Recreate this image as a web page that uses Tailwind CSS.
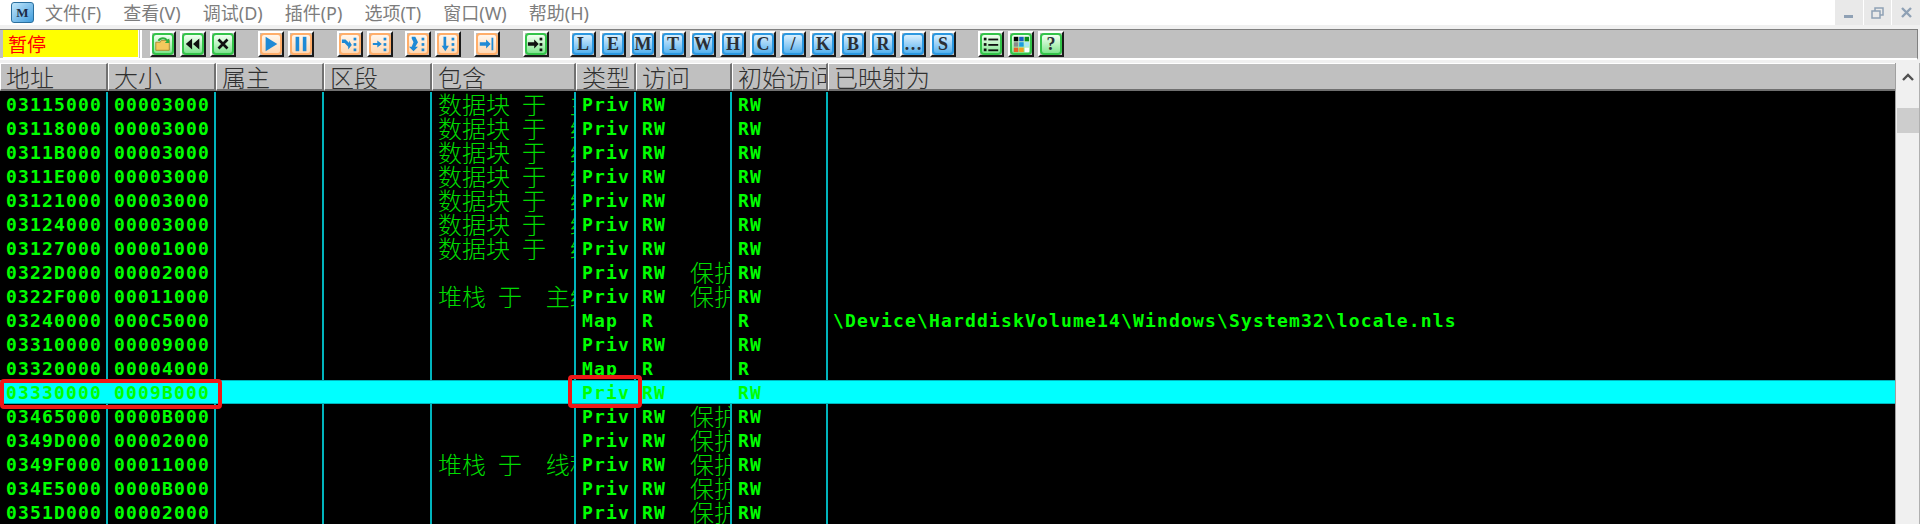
<!DOCTYPE html>
<html lang="zh">
<head>
    <meta charset="UTF-8">
    <title>OllyDbg</title>
    <script src="https://cdn.jsdelivr.net/npm/@tailwindcss/browser@4"></script>
</head>
<body class="bg-[#f0f0f0] overflow-hidden">
    <div class="relative w-[1920px] h-[524px] flex flex-col overflow-hidden font-['Noto_Sans','Noto_Sans_CJK_SC',sans-serif]">
        <!-- Menu bar -->
        <div class="h-[25px] bg-white flex items-center">
            <div class="ml-[11px] w-[23px] h-[21px] rounded-[3px] border border-[#2a6f9e] bg-linear-to-br from-[#bfe6fa] to-[#3d9ddc] flex items-center justify-center text-[13px] font-bold text-[#1c2a44] font-['Liberation_Serif',serif]">M</div>
            <div class="ml-[11px] flex gap-[22px] text-[18px] text-[#7d7d7d] leading-none">
                <span>文件(F)</span>
                <span>查看(V)</span>
                <span>调试(D)</span>
                <span>插件(P)</span>
                <span>选项(T)</span>
                <span>窗口(W)</span>
                <span>帮助(H)</span>
            </div>
            <div class="ml-auto w-[85px] h-full bg-[#e9e9e9] flex">
                <div class="flex-1 flex items-center justify-center border-r border-white">
                    <svg width="12" height="12" viewBox="0 0 12 12"><rect x="1" y="8" width="9" height="3" fill="#8fa1b5"/></svg>
                </div>
                <div class="flex-1 flex items-center justify-center border-r border-white">
                    <svg width="14" height="14" viewBox="0 0 14 14" fill="none" stroke="#8fa1b5" stroke-width="1.5"><rect x="1" y="5" width="8" height="7"/><path d="M4 5V2h8v7H9"/></svg>
                </div>
                <div class="flex-1 flex items-center justify-center">
                    <svg width="13" height="13" viewBox="0 0 13 13" fill="none" stroke="#8fa1b5" stroke-width="2.4"><path d="M2 2l9 9M11 2l-9 9"/></svg>
                </div>
            </div>
        </div>
        <div class="h-[4px] bg-[#f0f0f0]"></div>

        <!-- Toolbar -->
        <div class="h-[31px] mr-[2px] bg-[#c0c0c0] border-t border-t-[#808080] border-b-2 border-b-white border-r border-r-[#808080] flex items-center">
            <div class="ml-[3px] w-[136px] h-[28px] bg-[#ffff00] text-[#ff0000] text-[19px] leading-none flex items-center pl-[5px] border-r border-b border-white font-['Noto_Sans_CJK_SC',sans-serif]">暂停</div>
            <div class="w-[2px] h-full ml-[1px] bg-white"></div>
            <div id="toolbar" class="ml-[8px] flex"></div>
        </div>
        <div class="h-[3px] bg-[#f0f0f0]"></div>

        <!-- Memory map -->
        <div class="flex-1 flex min-h-0">
            <div class="flex-1 flex flex-col min-w-0 bg-black">
                <div class="h-[28px] grid grid-cols-[108px_108px_108px_108px_144px_60px_96px_96px_1fr] bg-[#c0c0c0] text-[24px] leading-[26px] text-[#303030] font-light font-['Noto_Sans_CJK_SC',sans-serif]">
                    <div class="border-t border-l border-white border-r-2 border-r-[#707070] border-b-2 border-b-[#707070] pl-[5px] overflow-hidden whitespace-nowrap">地址</div>
                    <div class="border-t border-l border-white border-r-2 border-r-[#707070] border-b-2 border-b-[#707070] pl-[5px] overflow-hidden whitespace-nowrap">大小</div>
                    <div class="border-t border-l border-white border-r-2 border-r-[#707070] border-b-2 border-b-[#707070] pl-[5px] overflow-hidden whitespace-nowrap">属主</div>
                    <div class="border-t border-l border-white border-r-2 border-r-[#707070] border-b-2 border-b-[#707070] pl-[5px] overflow-hidden whitespace-nowrap">区段</div>
                    <div class="border-t border-l border-white border-r-2 border-r-[#707070] border-b-2 border-b-[#707070] pl-[5px] overflow-hidden whitespace-nowrap">包含</div>
                    <div class="border-t border-l border-white border-r-2 border-r-[#707070] border-b-2 border-b-[#707070] pl-[5px] overflow-hidden whitespace-nowrap">类型</div>
                    <div class="border-t border-l border-white border-r-2 border-r-[#707070] border-b-2 border-b-[#707070] pl-[5px] overflow-hidden whitespace-nowrap">访问</div>
                    <div class="border-t border-l border-white border-r-2 border-r-[#707070] border-b-2 border-b-[#707070] pl-[5px] overflow-hidden whitespace-nowrap">初始访问</div>
                    <div class="border-t border-l border-white border-b-2 border-b-[#707070] pl-[5px] overflow-hidden whitespace-nowrap">已映射为</div>
                </div>
                <div id="rows" class="pt-px"></div>
            </div>
            <!-- Scrollbar -->
            <div class="w-[25px] bg-[#f0f0f0] border-l border-l-[#a0a0a0] border-r border-r-[#b0b0b0] flex flex-col items-center">
                <svg class="mt-[9px]" width="12" height="10" viewBox="0 0 12 10" fill="none" stroke="#505050" stroke-width="2.4"><path d="M1 8l5-5 5 5"/></svg>
                <div class="mt-[26px] w-[22px] h-[25px] bg-[#cdcdcd]"></div>
            </div>
        </div>

        <!-- Red annotation boxes -->
        <div class="absolute left-0 top-[379px] w-[222px] h-[30px] border-4 border-[#f01818] rounded-[4px]"></div>
        <div class="absolute left-[568px] top-[375px] w-[74px] h-[33px] border-4 border-[#f01818] rounded-[4px]"></div>
    </div>

    <script>
        const tones = {
            green: 'border-[#34c44a] from-[#f2fff2] to-[#7fe58f]',
            orange: 'border-[#ffae6a] from-[#fff6ec] to-[#ffd9b5]',
            blue: 'border-[#2c98e0] from-[#d8effd] to-[#55b2ee]'
        };
        const blue = '#1f8ad6';
        const dots = (c) => `<rect x="14" y="3" width="3" height="3" fill="${c}"/><rect x="14" y="9" width="3" height="3" fill="${c}"/><rect x="14" y="15" width="3" height="3" fill="${c}"/>`;
        const svg = (body) => `<svg width="20" height="20" viewBox="0 0 20 20">${body}</svg>`;
        const letter = (t) => `<span class="text-[18px] font-bold leading-none text-[#2b2f36] font-['Liberation_Serif',serif]">${t}</span>`;
        const icons = {
            open: svg('<path d="M2 8h5l1-2h9v11H2z" fill="#f4c95d" stroke="#a8842c"/><path d="M4 6C6 2 12 1 15 5l2-1v5h-5l2-2C12 4 8 4 6 7z" fill="#2fae3e"/>'),
            rewind: svg('<path d="M9 4v12L2 10zM17 4v12l-7-6z" fill="#101010"/>'),
            close: svg('<path d="M5 5l10 10M15 5L5 15" stroke="#101010" stroke-width="3"/>'),
            play: svg(`<path d="M4 2l13 8-13 8z" fill="${blue}"/>`),
            pause: svg(`<rect x="4" y="2" width="4" height="16" fill="${blue}"/><rect x="12" y="2" width="4" height="16" fill="${blue}"/>`),
            into: svg(`<path d="M1 5h4l4 4V6l3 5-4 5v-3L4 9H1z" fill="${blue}"/>${dots(blue)}`),
            over: svg(`<path d="M2 9h5V6l5 4-5 4v-3H2z" fill="${blue}"/>${dots(blue)}`),
            animInto: svg(`<path d="M3 2h4l3 6-3 5h3l-5 5-5-5h3l2-5-2-4z" fill="${blue}"/>${dots(blue)}`),
            animOver: svg(`<path d="M5 2h3v10h3l-4 6-4-6h2z" fill="${blue}"/>${dots(blue)}`),
            till: svg(`<path d="M2 8h7V5l5 5-5 5v-3H2z" fill="${blue}"/><rect x="15" y="3" width="2" height="14" fill="${blue}"/>`),
            goto: svg('<path d="M1 8h7V5l5 5-5 5v-3H1z" fill="#101010"/>' + dots('#101010')),
            list: svg('<g fill="#101010"><rect x="2" y="3" width="3" height="3"/><rect x="2" y="9" width="3" height="3"/><rect x="2" y="15" width="3" height="3"/><rect x="7" y="4" width="11" height="2"/><rect x="7" y="10" width="11" height="2"/><rect x="7" y="16" width="11" height="2"/></g>'),
            colors: svg('<rect x="2" y="2" width="5" height="5" fill="#000"/><rect x="8" y="2" width="5" height="5" fill="#1a5fc0"/><rect x="14" y="2" width="5" height="5" fill="#0a8a1a"/><rect x="2" y="8" width="5" height="5" fill="#8a8a8a"/><rect x="8" y="8" width="5" height="5" fill="#1a9fe0"/><rect x="14" y="8" width="5" height="5" fill="#a8e8f8"/><rect x="2" y="14" width="5" height="5" fill="#e8602a"/><rect x="8" y="14" width="5" height="5" fill="#f0a020"/><rect x="14" y="14" width="5" height="5" fill="#fff"/>'),
            help: letter('?')
        };
        const groups = [
            ['', [['green', icons.open], ['green', icons.rewind], ['green', icons.close]]],
            ['ml-[22px]', [['orange', icons.play], ['orange', icons.pause]]],
            ['ml-[23px]', [['orange', icons.into], ['orange', icons.over]]],
            ['ml-[12px]', [['orange', icons.animInto], ['orange', icons.animOver]]],
            ['ml-[13px]', [['orange', icons.till]]],
            ['ml-[23px]', [['green', icons.goto]]],
            ['ml-[21px]', 'LEMTWHC/KBR…S'.split('').map((c) => ['blue', letter(c)])],
            ['ml-[22px]', [['green', icons.list], ['green', icons.colors], ['green', icons.help]]]
        ];
        document.getElementById('toolbar').innerHTML = groups.map(([ml, items]) =>
            `<div class="flex gap-[4px] ${ml}">` + items.map(([tone, inner]) =>
                `<div class="w-[26px] h-[26px] border-2 border-t-white border-l-white border-r-[#1a1a1a] border-b-[#1a1a1a]"><div class="w-full h-full rounded-[4px] border-2 bg-linear-to-b ${tones[tone]} flex items-center justify-center overflow-hidden">${inner}</div></div>`
            ).join('') + '</div>'
        ).join('');

        const BLOCK = '数据块 于  线程', STACK_MAIN = '堆栈 于  主线', STACK_THREAD = '堆栈 于  线程';
        const data = [
            ['03115000', '00003000', '数据块 于  主线', 'Priv', 'RW', 'RW'],
            ['03118000', '00003000', BLOCK, 'Priv', 'RW', 'RW'],
            ['0311B000', '00003000', BLOCK, 'Priv', 'RW', 'RW'],
            ['0311E000', '00003000', BLOCK, 'Priv', 'RW', 'RW'],
            ['03121000', '00003000', BLOCK, 'Priv', 'RW', 'RW'],
            ['03124000', '00003000', BLOCK, 'Priv', 'RW', 'RW'],
            ['03127000', '00001000', BLOCK, 'Priv', 'RW', 'RW'],
            ['0322D000', '00002000', '', 'Priv', 'RW', 'RW', true],
            ['0322F000', '00011000', STACK_MAIN, 'Priv', 'RW', 'RW', true],
            ['03240000', '000C5000', '', 'Map', 'R', 'R', false, '\\Device\\HarddiskVolume14\\Windows\\System32\\locale.nls'],
            ['03310000', '00009000', '', 'Priv', 'RW', 'RW'],
            ['03320000', '00004000', '', 'Map', 'R', 'R'],
            ['03330000', '0009B000', '', 'Priv', 'RW', 'RW', false, '', true],
            ['03465000', '0000B000', '', 'Priv', 'RW', 'RW', true],
            ['0349D000', '00002000', '', 'Priv', 'RW', 'RW', true],
            ['0349F000', '00011000', STACK_THREAD, 'Priv', 'RW', 'RW', true],
            ['034E5000', '0000B000', '', 'Priv', 'RW', 'RW', true],
            ['0351D000', '00002000', '', 'Priv', 'RW', 'RW', true]
        ];
        const cjk = "inline-block h-[24px] align-top leading-[24px] tracking-normal font-['Noto_Sans_CJK_SC',sans-serif] font-light text-[24px] text-[#00dc00] [word-spacing:6.6px]";
        document.getElementById('rows').innerHTML = data.map(([addr, size, contains, type, access, init, guard, path, selected]) => {
            const cell = 'overflow-hidden whitespace-pre pl-[6px] border-r-2 ' + (selected ? 'border-r-transparent' : 'border-r-[#00b4bc]');
            return `
            <div class="h-[24px] grid grid-cols-[108px_108px_108px_108px_144px_60px_96px_96px_1fr] text-[18px] font-bold tracking-[1.16px] text-[#00ff00] font-['DejaVu_Sans_Mono',monospace] ${selected ? 'bg-[#00ffff] border-y border-y-[#00b4bc] leading-[24px]' : 'leading-[26px]'}">
                <div class="${cell}">${addr}</div>
                <div class="${cell}">${size}</div>
                <div class="${cell}"></div>
                <div class="${cell}"></div>
                <div class="${cell} pl-[5px]"><span class="${cjk}">${contains}</span></div>
                <div class="${cell}">${type}</div>
                <div class="${cell}">${access}${guard ? `  <span class="${cjk}">保护</span>` : ''}</div>
                <div class="${cell}">${init}</div>
                <div class="overflow-hidden whitespace-pre pl-[5px]">${path || ''}</div>
            </div>`;
        }).join('');
    </script>
</body>
</html>
